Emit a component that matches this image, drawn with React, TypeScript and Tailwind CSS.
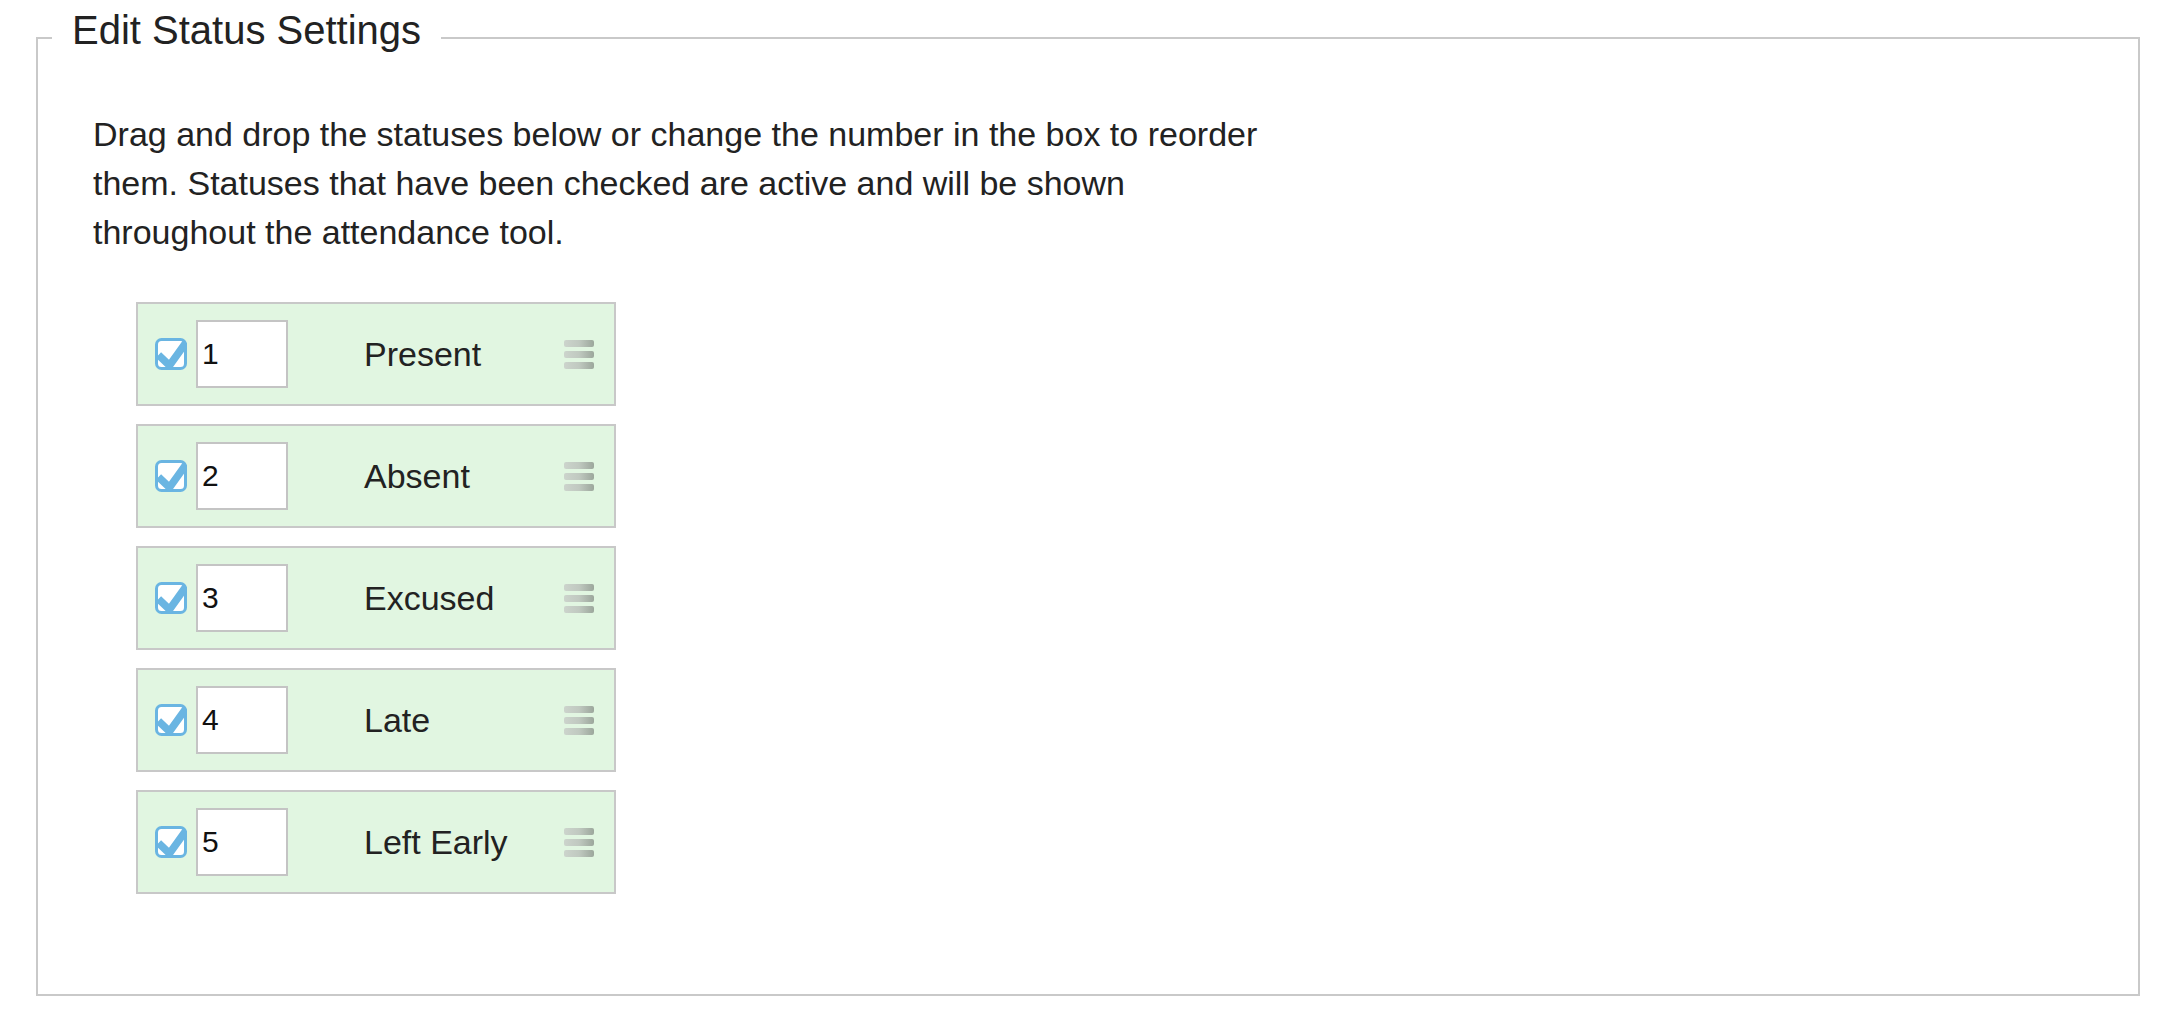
const statuses = [
  { order: 1, label: "Present" },
  { order: 2, label: "Absent" },
  { order: 3, label: "Excused" },
  { order: 4, label: "Late" },
  { order: 5, label: "Left Early" },
];

function CheckedBox() {
  return (
    <svg width="32" height="32" viewBox="0 0 32 32" className="shrink-0" aria-hidden="true">
      <rect x="1.5" y="1.5" width="29" height="29" rx="5" fill="#fff" stroke="#6ab5e2" strokeWidth="3" />
      <polyline
        points="3.5,17 14.5,27.5 31,4.5"
        fill="none"
        stroke="#6ab5e2"
        strokeWidth="7.5"
        strokeLinejoin="miter"
      />
    </svg>
  );
}

function DragHandle() {
  return (
    <div className="flex w-[30px] flex-col gap-[4px]" aria-hidden="true">
      {[0, 1, 2].map((i) => (
        <span
          key={i}
          className="block h-[7px] rounded-[2px] bg-linear-to-r from-[#ccd4cc] via-[#c0c9c0] to-[#9ca79c]"
        />
      ))}
    </div>
  );
}

export default function App() {
  return (
    <div className="min-h-[1016px] bg-white pt-[18px] font-['Liberation_Sans',Arial,sans-serif] text-[#222]">
      <fieldset className="mx-9 border-2 border-[#c9c9c9] px-0 pb-[100px]">
        <legend className="ml-[14px] px-5 text-[40px] leading-10">
          <span className="relative -top-2">Edit Status Settings</span>
        </legend>

        <div className="pl-[55px] pt-[52px]">
          <p className="max-w-[1185px] text-[34px] leading-[49px]">
            Drag and drop the statuses below or change the number in the box to reorder
            them. Statuses that have been checked are active and will be shown
            throughout the attendance tool.
          </p>

          <ul className="ml-[43px] mt-[45px] flex flex-col gap-[18px]">
            {statuses.map(({ order, label }) => (
              <li
                key={order}
                className="flex h-[104px] w-[480px] items-center border-2 border-[#c8c8c8] bg-[#e1f6e1] pl-[17px] pr-5"
              >
                <CheckedBox />
                <input
                  type="text"
                  defaultValue={order}
                  className="ml-[9px] h-[68px] w-[92px] border-2 border-[#c4c4c4] bg-white px-[4px] text-[30px] text-[#111] outline-none"
                />
                <span className="ml-[76px] text-[34px] leading-10">{label}</span>
                <div className="ml-auto">
                  <DragHandle />
                </div>
              </li>
            ))}
          </ul>
        </div>
      </fieldset>
    </div>
  );
}
